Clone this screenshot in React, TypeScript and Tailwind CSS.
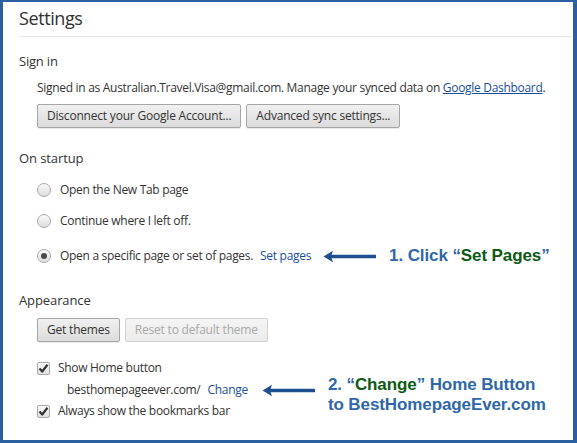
import React from "react";

const body = { fontFamily: '"Open Sans", "Noto Sans", sans-serif' };
const ann = { fontFamily: '"Liberation Sans", Arial, sans-serif' };

function Btn({ children, disabled }: { children: React.ReactNode; disabled?: boolean }) {
  return (
    <div
      className={
        "h-[24px] px-[9px] flex items-center rounded-[2px] border text-[12px] leading-none tracking-[-0.2px] " +
        (disabled
          ? "border-[#d0d0d0] bg-gradient-to-b from-[#f4f4f4] to-[#ececec] text-[#a8a8a8]"
          : "border-[#a6a6a6] bg-gradient-to-b from-[#f0f0f0] to-[#dcdcdc] text-[#333] shadow-[0_1px_0_rgba(0,0,0,0.08)]")
      }
    >
      {children}
    </div>
  );
}

function Radio({ checked }: { checked?: boolean }) {
  return (
    <div className="w-[14px] h-[14px] rounded-full border border-[#a9a9a9] bg-gradient-to-b from-[#fafafa] to-[#dedede] flex items-center justify-center">
      {checked && <div className="w-[6px] h-[6px] rounded-full bg-[#4a4a4a]" />}
    </div>
  );
}

function Check() {
  return (
    <div className="w-[13px] h-[13px] rounded-[2px] border border-[#a9a9a9] bg-gradient-to-b from-[#fafafa] to-[#e0e0e0] flex items-center justify-center">
      <svg width="11" height="11" viewBox="0 0 11 11">
        <path d="M1.5 5.5 L4.2 8.5 L9.5 1.8" fill="none" stroke="#333" strokeWidth="2.2" strokeLinejoin="round" />
      </svg>
    </div>
  );
}

function Arrow({ w }: { w: number }) {
  return (
    <svg width={w} height="13" viewBox={`0 0 ${w} 13`}>
      <path d={`M${w - 1} 6.5 L8 6.5`} stroke="#1f4f8f" strokeWidth="3.5" strokeLinecap="round" />
      <path d="M0.5 6.5 L10 0.8 L8 6.5 L10 12.2 Z" fill="#1f4f8f" />
    </svg>
  );
}

export default function App() {
  return (
    <div className="w-[577px] h-[443px] bg-white border-l-[3px] border-t-[2px] border-r-[4px] border-b-[3px] border-[#2c5f9f] overflow-hidden text-[#333]" style={body}>
      <div className="pl-[16px] pt-[2px]">
        <div className="text-[18px] leading-[28px] tracking-[-0.4px] text-[#303030] h-[32px]">Settings</div>
        <div className="h-px bg-[#e6e6e6] mr-[2px]" />
        <div className="text-[13px] leading-[20px] tracking-[-0.2px] mt-[14px]">Sign in</div>
        <div className="pl-[18px] mt-[9px] text-[12px] leading-[16px] tracking-[-0.3px]">
          Signed in as Australian.Travel.Visa@gmail.com. Manage your synced data on{" "}
          <span className="text-[#1a4e9a] underline">Google Dashboard</span>.
        </div>
        <div className="pl-[18px] mt-[8px] flex gap-[5px]">
          <Btn>Disconnect your Google Account...</Btn>
          <Btn>Advanced sync settings...</Btn>
        </div>

        <div className="text-[13px] leading-[20px] tracking-[-0.1px] mt-[20px]">On startup</div>
        <div className="pl-[18px] mt-[14px] flex flex-col gap-[16px] text-[12px] leading-[16px] tracking-[-0.3px]">
          <div className="flex items-center gap-[9px] h-[16px]">
            <Radio />
            <span>Open the New Tab page</span>
          </div>
          <div className="flex items-center gap-[9px] h-[16px] mt-[-1px]">
            <Radio />
            <span>Continue where I left off.</span>
          </div>
          <div className="flex items-center h-[16px] mt-[3px]">
            <Radio checked />
            <span className="ml-[9px]">Open a specific page or set of pages.</span>
            <span className="ml-[7px] text-[#1a4e9a]">Set pages</span>
            <span className="ml-[12px] flex items-center"><Arrow w={53} /></span>
            <span className="ml-[13px] text-[17px] font-bold text-[#2f67a8] tracking-[-0.1px]" style={ann}>
              1. Click “<span className="text-[#0c5a16]">Set Pages</span>”
            </span>
          </div>
        </div>

        <div className="text-[13px] leading-[20px] tracking-[-0.1px] mt-[26px]">Appearance</div>
        <div className="pl-[18px] mt-[8px] flex gap-[5px]">
          <Btn>Get themes</Btn>
          <Btn disabled>Reset to default theme</Btn>
        </div>
        <div className="pl-[18px] mt-[18px] text-[12px] leading-[16px] tracking-[-0.3px] relative">
          <div className="flex items-center gap-[8px] h-[16px]">
            <Check />
            <span>Show Home button</span>
          </div>
          <div className="flex items-center h-[16px] mt-[6px] pl-[30px]">
            <span>besthomepageever.com/</span>
            <span className="ml-[7px] text-[#1a4e9a]">Change</span>
            <span className="ml-[14px] flex items-center"><Arrow w={53} /></span>
            <div className="ml-[13px] text-[17px] leading-[20px] font-bold text-[#2f67a8] tracking-[-0.1px] mt-[10px]" style={ann}>
              <div>2. “<span className="text-[#0c5a16]">Change</span>” Home Button</div>
              <div>to BestHomepageEver.com</div>
            </div>
          </div>
          <div className="flex items-center gap-[8px] h-[16px] mt-[5px]">
            <Check />
            <span>Always show the bookmarks bar</span>
          </div>
        </div>
      </div>
    </div>
  );
}
